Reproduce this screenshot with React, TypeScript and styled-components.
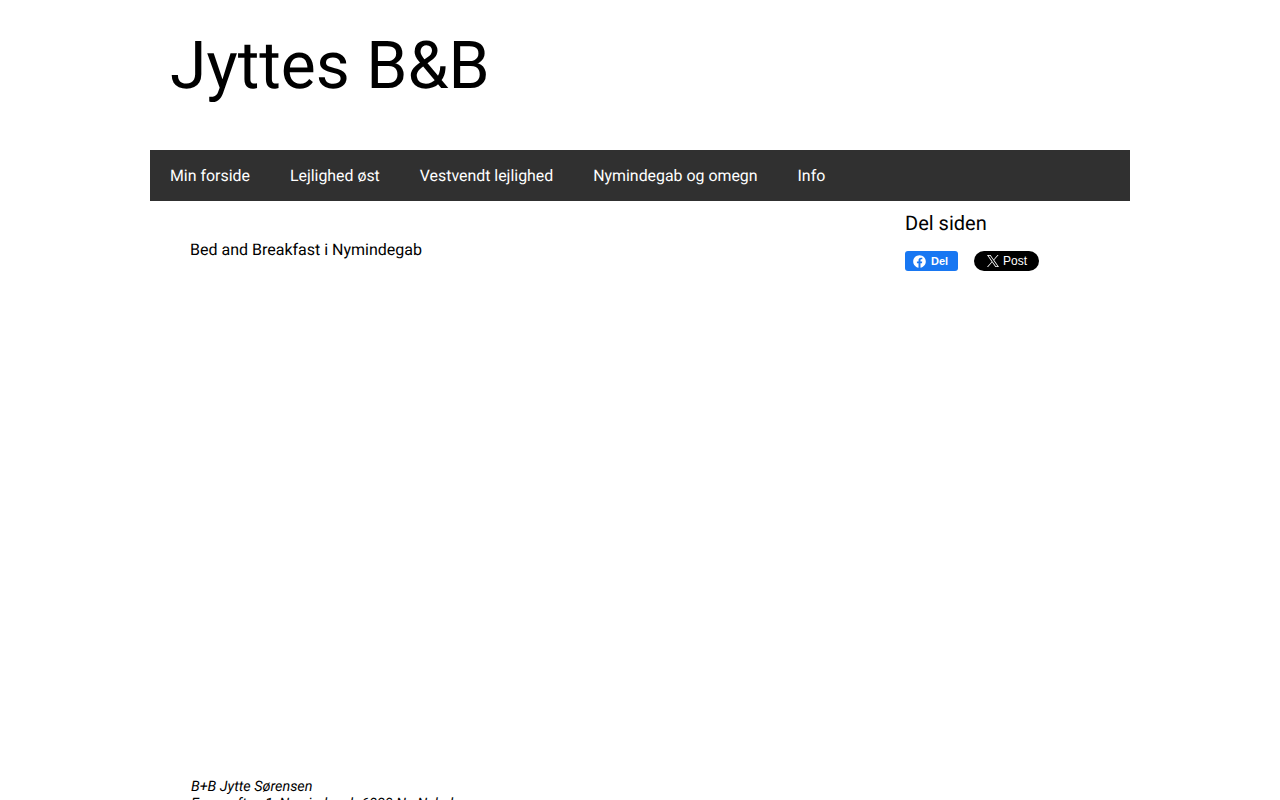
import React from 'react';
import styled, { createGlobalStyle } from 'styled-components';
import { FaFacebook } from 'react-icons/fa';

const GlobalStyle = createGlobalStyle`
  html, body {
    margin: 0;
    padding: 0;
    background: #fff;
    color: #000;
    font-family: Roboto, "Liberation Sans", sans-serif;
    text-rendering: geometricPrecision;
  }
  html {
    overflow: hidden;
    height: 800px;
  }
`;

const Page = styled.div`
  width: 980px;
  margin: 0 auto;
`;

const Header = styled.header`
  height: 150px;
  padding: 27px 20px 0;
  box-sizing: border-box;
`;

const Title = styled.h1`
  margin: 0;
  font-size: 66px;
  line-height: 80px;
  font-weight: 400;
`;

const Nav = styled.nav`
  display: flex;
  height: 51px;
  background: #303030;
`;

const NavItem = styled.a`
  display: flex;
  align-items: center;
  padding: 0 20px;
  color: #fff;
  font-size: 15.9px;
  text-decoration: none;
`;

const Columns = styled.div`
  display: flex;
  align-items: flex-start;
`;

const Content = styled.main`
  flex: 1;
  padding: 39px 0 0 40px;
`;

const Intro = styled.p`
  margin: 0;
  font-size: 16px;
  line-height: 20px;
`;

const Address = styled.address`
  margin: 518px 0 0 1px;
  font-size: 14.4px;
  line-height: 17px;
  font-style: italic;
`;

const Sidebar = styled.aside`
  width: 225px;
  padding-top: 10px;
`;

const SidebarTitle = styled.h2`
  margin: 0;
  font-size: 20px;
  line-height: 24px;
  font-weight: 400;
`;

const ShareRow = styled.div`
  display: flex;
  gap: 16px;
  margin-top: 16px;
`;

const FacebookButton = styled.a`
  display: flex;
  align-items: center;
  gap: 5px;
  width: 53px;
  height: 20px;
  padding-left: 8px;
  box-sizing: border-box;
  border-radius: 3px;
  background: #1877f2;
  color: #fff;
  font-family: "Liberation Sans", Arial, sans-serif;
  font-size: 11px;
  font-weight: 700;
  text-rendering: auto;
`;

const PostButton = styled.a`
  display: flex;
  align-items: center;
  gap: 4px;
  width: 65px;
  height: 20px;
  padding-left: 13px;
  box-sizing: border-box;
  border-radius: 10px;
  background: #000;
  color: #fff;
  font-family: "Liberation Sans", Arial, sans-serif;
  font-size: 12px;
  text-rendering: auto;
`;

const XIcon = () => (
  <svg width="12" height="12" viewBox="0 0 24 24" fill="#fff" aria-hidden="true">
    <path d="M14.258 10.152 23.176 0h-2.113l-7.747 8.813L7.133 0H0l9.352 13.328L0 23.973h2.113l8.176-9.309 6.531 9.309h7.133zm-2.895 3.293-.949-1.328L2.875 1.56h3.246l6.086 8.523.945 1.328 7.91 11.078h-3.246z" />
  </svg>
);

const navItems = ['Min forside', 'Lejlighed øst', 'Vestvendt lejlighed', 'Nymindegab og omegn', 'Info'];

export default function App() {
  return (
    <>
      <GlobalStyle />
      <Page>
        <Header>
          <Title>Jyttes B&amp;B</Title>
        </Header>
        <Nav>
          {navItems.map((item) => (
            <NavItem key={item}>{item}</NavItem>
          ))}
        </Nav>
        <Columns>
          <Content>
            <Intro>Bed and Breakfast i Nymindegab</Intro>
            <Address>
              B+B Jytte Sørensen
              <br />
              Engesoften 1, Nymindegab 6830 Nr. Nebel
            </Address>
          </Content>
          <Sidebar>
            <SidebarTitle>Del siden</SidebarTitle>
            <ShareRow>
              <FacebookButton>
                <FaFacebook size={13} />
                Del
              </FacebookButton>
              <PostButton>
                <XIcon />
                Post
              </PostButton>
            </ShareRow>
          </Sidebar>
        </Columns>
      </Page>
    </>
  );
}
